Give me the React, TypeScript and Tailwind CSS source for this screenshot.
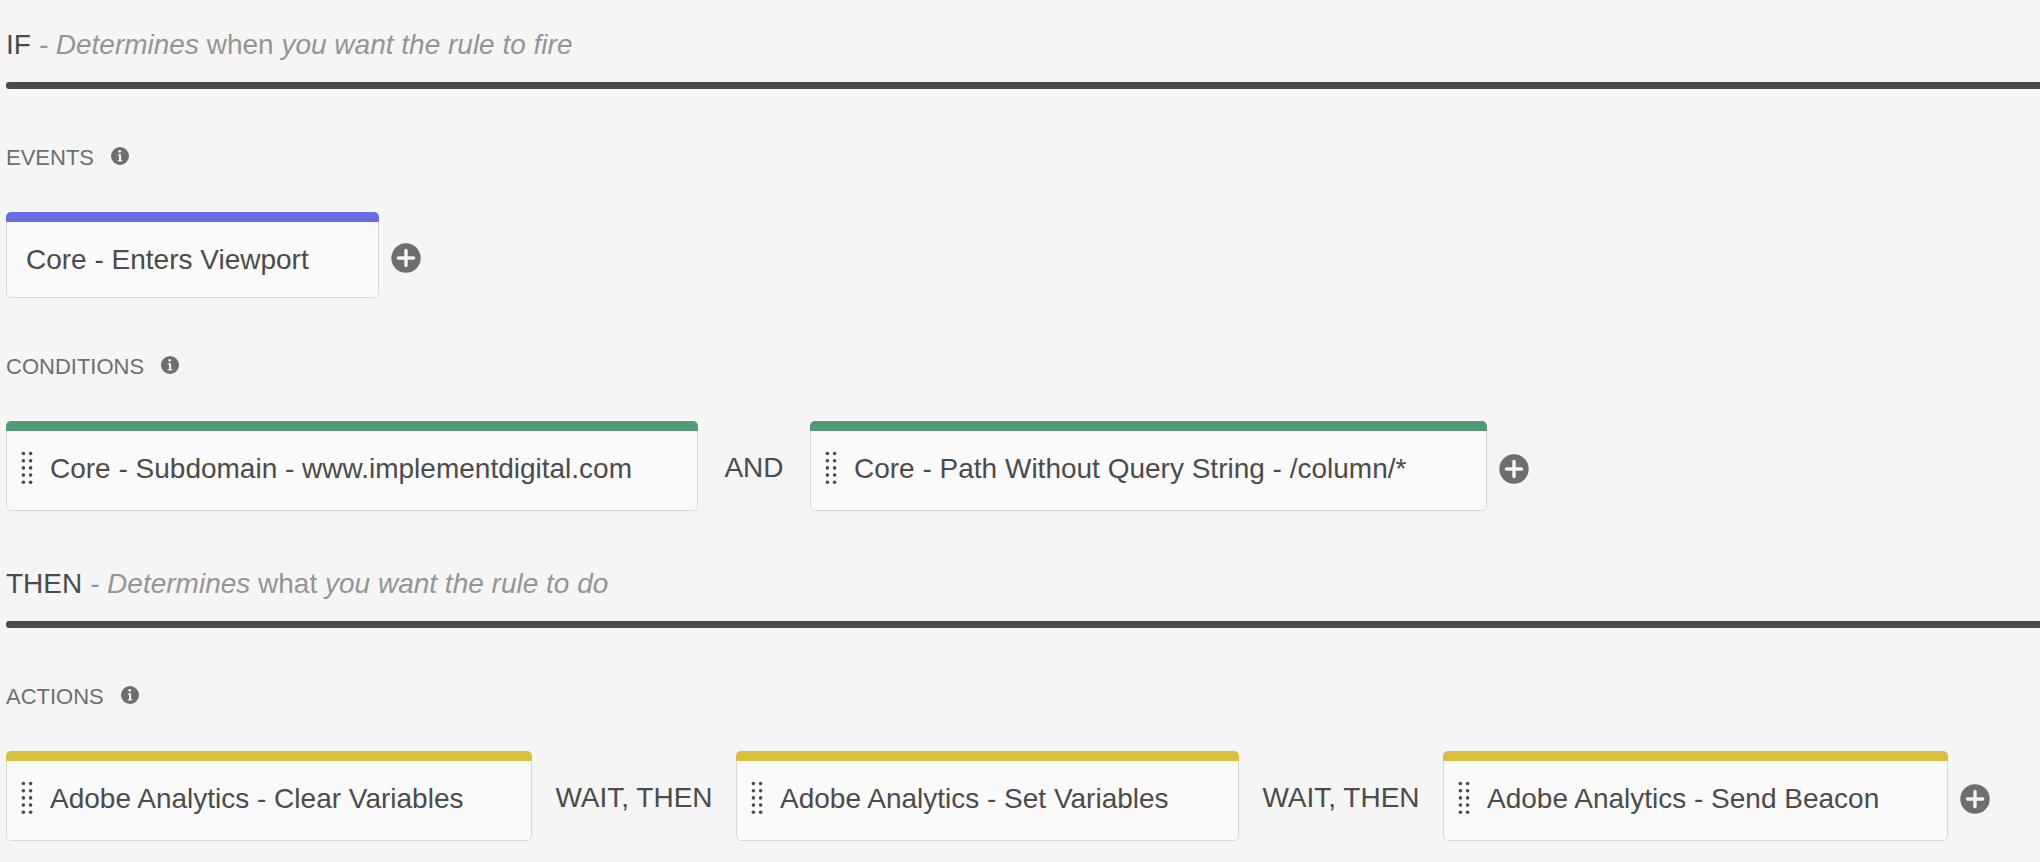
import React from "react";

function InfoIcon() {
  return (
    <svg viewBox="0 0 18 18" className="size-[18px]" aria-hidden="true">
      <circle cx="9" cy="9" r="9" fill="#6e6e6e" />
      <circle cx="8.7" cy="4.3" r="1.4" fill="#f5f5f5" />
      <path d="M6.8 7.2h3.3v6h1.2v1.2H6.8v-1.2H8V8.4H6.8z" fill="#f5f5f5" />
    </svg>
  );
}

function PlusIcon() {
  return (
    <svg viewBox="0 0 30 30" className="size-[30px]" aria-hidden="true">
      <circle cx="15" cy="15" r="14.7" fill="#6e6e6e" />
      <path d="M15 7.4v15.2M7.4 15h15.2" stroke="#f5f5f5" strokeWidth="3.4" strokeLinecap="round" />
    </svg>
  );
}

function DragHandle() {
  const rows = [2.5, 9.7, 16.9, 24.1, 31.3];
  return (
    <svg viewBox="0 0 12 36" className="h-9 w-3 shrink-0" aria-hidden="true">
      {rows.map((y) => (
        <g key={y} fill="#4b4b4b">
          <circle cx="2.4" cy={y} r="1.8" />
          <circle cx="9.6" cy={y} r="1.8" />
        </g>
      ))}
    </svg>
  );
}

function Clause({ name, emphasis, rest }: { name: string; emphasis: string; rest: string }) {
  return (
    <header>
      <h2 className="text-[28px] leading-9 text-[#4b4b4b]">
        {name}{" "}
        <span className="text-[#959595]">
          <i>- Determines</i> {emphasis} <i>{rest}</i>
        </span>
      </h2>
      <div className="mt-[19px] h-[7px] rounded-l-[3px] bg-[#4b4b4b]" />
    </header>
  );
}

type GroupProps = {
  title: string;
  bar: string;
  items: { label: string; width: string }[];
  joiner?: { label: string; width: string };
};

function Group({ title, bar, items, joiner }: GroupProps) {
  return (
    <section className="mt-[55px]">
      <div className="flex items-center gap-[17px]">
        <h3 className="text-[22px] leading-7 text-[#6e6e6e]">{title}</h3>
        <button type="button" aria-label={`About ${title.toLowerCase()}`} className="pb-1">
          <InfoIcon />
        </button>
      </div>
      <div className="mt-10 flex items-center">
        {items.map((item, i) => (
          <React.Fragment key={item.label}>
            {i > 0 && joiner && (
              <span
                className={`shrink-0 pt-[3px] text-center text-[28px] leading-9 whitespace-nowrap text-[#4b4b4b] ${joiner.width}`}
              >
                {joiner.label}
              </span>
            )}
            <button
              type="button"
              className={`shrink-0 overflow-hidden rounded-[5px] text-left ${item.width}`}
            >
              <span className={`block h-[10px] ${bar}`} />
              <span
                className={`flex rounded-b-[5px] border border-t-0 border-[#d8d8d8] bg-[#fafafa] pt-5 text-[28px] leading-9 whitespace-nowrap text-[#4b4b4b] ${
                  joiner ? "gap-[17px] pb-[23px] pl-[14px]" : "pb-[19px] pl-[19px]"
                }`}
              >
                {joiner && <DragHandle />}
                {item.label}
              </span>
            </button>
          </React.Fragment>
        ))}
        <button type="button" aria-label={`Add to ${title.toLowerCase()}`} className="ml-3 shrink-0 pt-[6px]">
          <PlusIcon />
        </button>
      </div>
    </section>
  );
}

export default function App() {
  return (
    <main className="min-h-screen overflow-x-hidden bg-[#f5f5f5] pt-[27px] pb-5 pl-[6px] font-['Liberation_Sans',Arial,sans-serif]">
      <Clause name="IF" emphasis="when" rest="you want the rule to fire" />
      <Group
        title="EVENTS"
        bar="bg-[#686de3]"
        items={[{ label: "Core - Enters Viewport", width: "w-[373px]" }]}
      />
      <Group
        title="CONDITIONS"
        bar="bg-[#519a78]"
        joiner={{ label: "AND", width: "w-[112px]" }}
        items={[
          { label: "Core - Subdomain - www.implementdigital.com", width: "w-[692px]" },
          { label: "Core - Path Without Query String - /column/*", width: "w-[677px]" },
        ]}
      />
      <div className="h-[55px]" />
      <Clause name="THEN" emphasis="what" rest="you want the rule to do" />
      <Group
        title="ACTIONS"
        bar="bg-[#dabf3f]"
        joiner={{ label: "WAIT, THEN", width: "w-[204px]" }}
        items={[
          { label: "Adobe Analytics - Clear Variables", width: "w-[526px]" },
          { label: "Adobe Analytics - Set Variables", width: "w-[503px]" },
          { label: "Adobe Analytics - Send Beacon", width: "w-[505px]" },
        ]}
      />
    </main>
  );
}
